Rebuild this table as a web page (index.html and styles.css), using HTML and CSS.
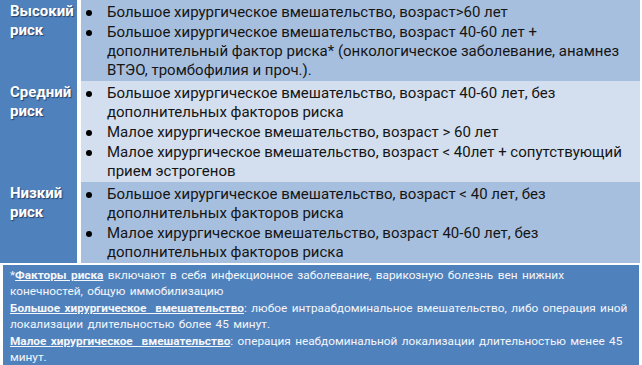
FILE: index.html
```html
<!DOCTYPE html>
<html lang="ru">
<head>
<meta charset="utf-8">
<link rel="stylesheet" href="styles.css">
</head>
<body>
<div class="sheet">
  <div class="row row-a">
    <div class="label">Высокий<br>риск</div>
    <ul class="items">
      <li>Большое хирургическое вмешательство, возраст&gt;60 лет</li>
      <li>Большое хирургическое вмешательство, возраст 40-60 лет +<br>дополнительный фактор риска* (онкологическое заболевание, анамнез<br>ВТЭО, тромбофилия и проч.).</li>
    </ul>
  </div>
  <div class="row row-b">
    <div class="label">Средний<br>риск</div>
    <ul class="items">
      <li>Большое хирургическое вмешательство, возраст 40-60 лет, без<br>дополнительных факторов риска</li>
      <li>Малое хирургическое вмешательство, возраст &gt; 60 лет</li>
      <li>Малое хирургическое вмешательство, возраст &lt; 40лет + сопутствующий<br>прием эстрогенов</li>
    </ul>
  </div>
  <div class="row row-a">
    <div class="label">Низкий<br>риск</div>
    <ul class="items">
      <li>Большое хирургическое вмешательство, возраст &lt; 40 лет, без<br>дополнительных факторов риска</li>
      <li>Малое хирургическое вмешательство, возраст 40-60 лет, без<br>дополнительных факторов риска</li>
    </ul>
  </div>
  <div class="notes">
    <p class="note">*<span class="term">Факторы риска</span> включают в себя инфекционное заболевание, варикозную болезнь вен нижних<br>конечностей, общую иммобилизацию</p>
    <p class="note"><span class="term">Большое хирургическое  вмешательство</span>:  любое интраабдоминальное  вмешательство, либо операция иной<br>локализации длительностью более 45 минут.</p>
    <p class="note"><span class="term">Малое хирургическое  вмешательство</span>:  операция неабдоминальной локализации длительностью менее 45<br>минут.</p>
  </div>
</div>
</body>
</html>
```
FILE: styles.css
```css
* { box-sizing: border-box; }
html, body { margin: 0; padding: 0; background: #ffffff; }
body { font-family: Roboto, "Liberation Sans", sans-serif; color: #151515; }

.sheet {
  width: 640px;
  display: flex;
  flex-direction: column;
  gap: 2px;
}

.row {
  display: grid;
  grid-template-columns: 77px 1fr;
  column-gap: 4px;
}
.row-a .items { background: #a7bfde; }
.row-b .items { background: #d3dfee; }
.row:nth-child(1) { height: 79px; }
.row:nth-child(2) { height: 99px; }
.row:nth-child(3) { height: 80px; margin-bottom: 1px; }

.label {
  background: #4f81bd;
  color: #ffffff;
  font-weight: 700;
  font-size: 15px;
  line-height: 19px;
  padding: 2px 0 0 10px;
  text-shadow: 1px 1px 1px rgba(20, 40, 70, 0.7);
}

.items {
  list-style: none;
  margin: 0;
  padding: 3px 0 0 0;
  font-size: 15px;
  line-height: 19px;
  white-space: nowrap;
}
.items li {
  position: relative;
  padding-left: 26px;
  margin-bottom: 1px;
}
.items li::before {
  content: "";
  position: absolute;
  left: 5px;
  top: 7px;
  width: 6px;
  height: 6px;
  border-radius: 50%;
  background: #000;
}

.notes {
  margin-left: 3px;
  margin-right: 1px;
  background: #4f81bd;
  color: #f4f6fa;
  font-size: 11.8px;
  line-height: 16.4px;
  padding: 2px 0 3px 7px;
  white-space: nowrap;
  word-spacing: 1.5px;
}
.note { margin: 0; }
.term {
  font-weight: 700;
  text-decoration: underline;
  white-space: pre;
}
```
